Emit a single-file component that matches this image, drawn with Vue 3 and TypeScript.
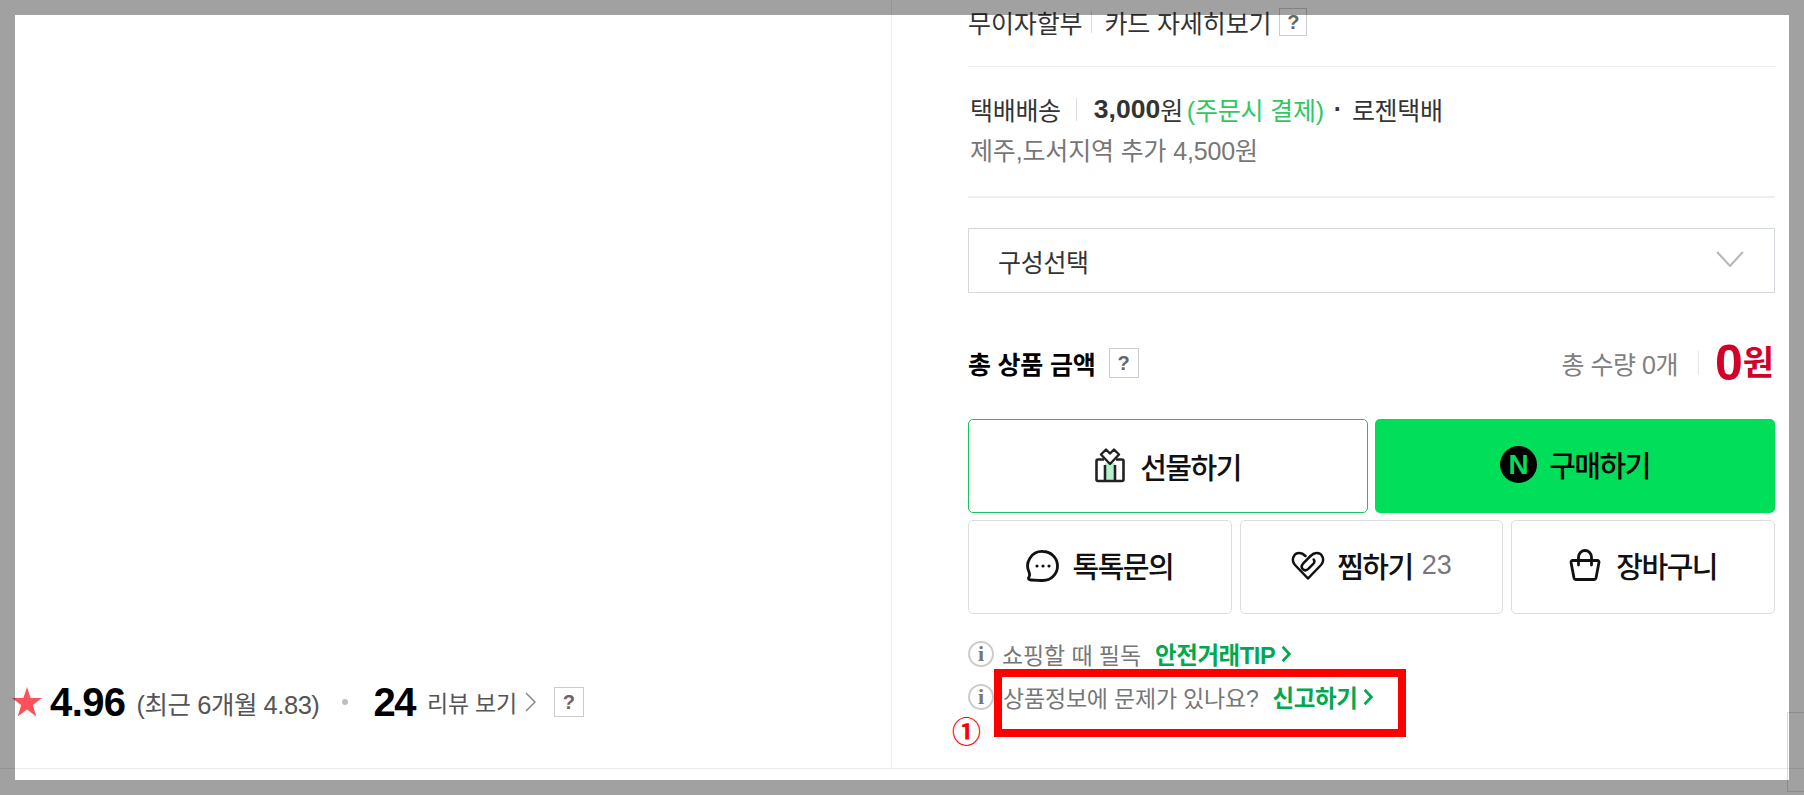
<script setup lang="ts">
interface Sub { label: string; count?: string }
const subs: Sub[] = [{ label: '톡톡문의' }, { label: '찜하기', count: '23' }, { label: '장바구니' }]
</script>

<template>
  <div class="page">
    <div class="main">
      <section class="left">
        <div class="rating">
          <svg class="star" viewBox="0 0 30 30"><path d="M15 0l3.600 10.900H30l-9.200 7 3.500 11.600L15 22.400 5.700 29.500l3.500-11.600L0 10.900h11.400z" fill="#fd5059" /></svg>
          <b class="score">4.96</b>
          <span class="recent">(최근 6개월 4.83)</span>
          <i class="dot"></i>
          <b class="score count">24</b>
          <span class="review">리뷰 보기</span>
          <svg class="rev-chev" viewBox="0 0 11 20"><path d="M1 1l9 9-9 9" fill="none" stroke="#888" stroke-width="1.500" /></svg>
          <span class="q q-rate">?</span>
        </div>
      </section>

      <section class="right">
        <div class="card-row">
          <span>무이자할부</span><i class="sep sep-card"></i><span>카드 자세히보기</span><span class="q q-card">?</span>
        </div>
        <div class="ship">
          <div class="ship-main">
            <span>택배배송</span><i class="sep sep-ship"></i><b class="fee">3,000</b><span>원</span><span class="green">(주문시 결제)</span><span class="mid">·</span><span>로젠택배</span>
          </div>
          <div class="ship-extra">제주,도서지역 추가 4,500원</div>
        </div>
        <div class="select">
          <span>구성선택</span>
          <svg class="chev" viewBox="0 0 26 15"><path d="M1 1l12 13L25 1" fill="none" stroke="#b4b9c2" stroke-width="2" /></svg>
        </div>
        <div class="total">
          <b class="total-label">총 상품 금액</b><span class="q q-total">?</span>
          <span class="qty">총 수량 0개</span><i class="sep sep-total"></i>
          <b class="zero">0</b><b class="won">원</b>
        </div>
        <div class="buy-row">
          <button class="btn gift">
            <svg class="gift-icon" viewBox="0 0 30 35">
              <path d="M10 15h10v18H10z" fill="#b5f2cc" />
              <path d="M9 11.500H3a1.500 1.500 0 0 0-1.500 1.500v18.500A1.500 1.500 0 0 0 3 33h24a1.500 1.500 0 0 0 1.500-1.500V13a1.500 1.500 0 0 0-1.500-1.500h-6M10 17v16M20 17v16" fill="none" stroke="#222" stroke-width="2.600" />
              <path d="M15 5.500L11 1.500 6 6.500 15 16l9-9.500-5-5z" fill="#fff" stroke="#222" stroke-width="2.400" stroke-linejoin="round" />
            </svg>
            <span>선물하기</span>
          </button>
          <button class="btn buy"><span class="npay">N</span><span>구매하기</span></button>
        </div>
        <div class="sub-row">
          <button v-for="(s, i) in subs" :key="s.label" class="btn sub">
            <svg v-if="i === 0" class="i-chat" viewBox="0 0 34 33">
              <path d="M17 2.500a14.500 14.500 0 0 1 0 29c-3.500 0-7-.5-12-.5-2 0-3.200-1.200-2-3 .8-1.300.8-2.500.2-4.500A14.500 14.500 0 0 1 17 2.500z" fill="none" stroke="#111" stroke-width="2.800" stroke-linejoin="round" />
              <circle cx="11" cy="17" r="1.600" fill="#111" /><circle cx="17" cy="17" r="1.600" fill="#111" /><circle cx="23" cy="17" r="1.600" fill="#111" />
            </svg>
            <svg v-else-if="i === 1" class="i-heart" viewBox="0 0 34 29">
              <path d="M14.500 5C13 3.500 11.500 2 8.500 2 2 2 0 9.500 4 14l13 13.500L30 14c4-4.500 2-12-4.500-12-3 0-4.500 1.500-6 3l-7 7.200c-2.200 2.300-2.200 4.500-.7 6 1.500 1.500 3.700 1.500 5.700-.5l4.500-4.500c1.500-1.500 1.800-3.200.7-4.700" fill="none" stroke="#111" stroke-width="2.500" stroke-linejoin="round" stroke-linecap="round" />
            </svg>
            <svg v-else class="i-bag" viewBox="0 0 32 32">
              <path d="M3.500 11.500h25a1.500 1.500 0 0 1 1.500 1.800l-3 15.700a2 2 0 0 1-2 1.500H7a2 2 0 0 1-2-1.500L2 13.300a1.500 1.500 0 0 1 1.500-1.800zM9.500 16V8a6.500 6.500 0 0 1 13 0v8" fill="none" stroke="#111" stroke-width="2.800" stroke-linejoin="round" stroke-linecap="round" />
            </svg>
            <span>{{ s.label }}</span><span v-if="s.count" class="cnt">{{ s.count }}</span>
          </button>
        </div>
        <div class="info">
          <span class="i-badge">i</span><span class="info-text">쇼핑할 때 필독</span><b class="link link-tip">안전거래TIP</b>
          <svg class="link-chev" viewBox="0 0 9 16"><path d="M1.500 1.500L7.500 8l-6 6.500" fill="none" stroke="#00a950" stroke-width="2.400" /></svg>
        </div>
        <div class="info info-2">
          <span class="i-badge">i</span><span class="info-text t2">상품정보에 문제가 있나요?</span><b class="link link-rep">신고하기</b>
          <svg class="link-chev" viewBox="0 0 9 16"><path d="M1.500 1.500L7.500 8l-6 6.500" fill="none" stroke="#00a950" stroke-width="2.400" /></svg>
        </div>
      </section>
    </div>

    <div class="mark"></div>
    <span class="num">①</span>
    <div class="corner"></div>
    <div class="frame"></div>
  </div>
</template>

<style>
html, body { margin: 0; background: #fff; overflow: hidden; }
</style>

<style scoped>
.page {
  position: relative;
  width: 1804px;
  height: 795px;
  overflow: hidden;
  background: #fff;
  font-family: "Liberation Sans", "Noto Sans CJK KR", sans-serif;
  color: #333;
}
.page i { font-style: normal; }
.main {
  display: flex;
  height: 768px;
  border-bottom: 1px solid #e9e9e9;
  box-sizing: content-box;
}
.left {
  width: 891px;
  flex: none;
  border-right: 1px solid #eee;
  display: flex;
  flex-direction: column;
  justify-content: flex-end;
  padding-bottom: 50px;
  box-sizing: content-box;
}
.rating { display: flex; align-items: center; height: 32px; padding-left: 12px; }
.star { width: 30px; height: 30px; flex: none; }
.score { font-size: 40px; line-height: 32px; color: #000; letter-spacing: -.6px; margin-left: 8px; }
.recent { font-size: 25.500px; color: #555; margin-left: 11px; letter-spacing: -.45px; }
.dot { width: 6px; height: 6px; border-radius: 50%; background: #bdbdbd; margin-left: 23px; }
.count { margin-left: 25px; letter-spacing: -1.500px; }
.review { font-size: 23px; color: #555; margin-left: 12px; letter-spacing: -.2px; }
.rev-chev { width: 11px; height: 20px; margin-left: 8px; flex: none; }
.q {
  display: inline-flex;
  align-items: center;
  justify-content: center;
  box-sizing: border-box;
  border: 1px solid #ccc;
  font-weight: 700;
  color: #666;
  font-size: 20px;
  flex: none;
}
.q-rate { width: 30px; height: 30px; margin-left: 18px; }
.right { width: 807px; margin-left: 76px; flex: none; }
.sep { display: block; width: 1px; background: #ddd; flex: none; }
.card-row {
  display: flex;
  align-items: center;
  height: 28px;
  margin-top: 8px;
  padding-bottom: 30px;
  border-bottom: 1px solid #eee;
  font-size: 25px;
  letter-spacing: -.12px;
}
.sep-card { height: 22px; margin: 0 12px 0 9px; }
.q-card { width: 28px; height: 28px; margin-left: 8px; letter-spacing: 0; }
.ship { height: 131px; box-sizing: border-box; border-bottom: 2px solid #eee; padding-top: 26px; }
.ship-main { display: flex; align-items: center; height: 32px; font-size: 25px; letter-spacing: -.3px; padding-left: 2px; }
.sep-ship { height: 23px; margin: 0 17px 0 15px; }
.fee { font-size: 26.500px; letter-spacing: 0; }
.green { color: #2fc85f; margin-left: 4px; letter-spacing: -.2px; }
.mid { margin: 0 10px 0 10px; font-weight: 700; }
.ship-extra { font-size: 25px; color: #777; margin-top: 10px; line-height: 32px; padding-left: 2px; letter-spacing: -.15px; }
.select {
  height: 65px;
  margin-top: 30px;
  box-sizing: border-box;
  border: 1px solid #d3d7de;
  display: flex;
  align-items: center;
  justify-content: space-between;
  padding: 0 30px 0 29px;
  font-size: 25px;
  letter-spacing: -.3px;
}
.chev { width: 28px; height: 16px; margin-top: -4px; }
.total { display: flex; align-items: center; height: 38px; margin-top: 51px; }
.total-label { font-size: 25px; color: #000; letter-spacing: -.2px; }
.q-total { width: 30px; height: 30px; margin-left: 13px; }
.qty { margin-left: auto; font-size: 25px; color: #808080; letter-spacing: -.5px; }
.sep-total { height: 24px; margin: 0 16px 0 20px; background: #e5e5e5; }
.zero { font-size: 50px; color: #d3002a; line-height: 38px; }
.won { font-size: 34px; color: #d3002a; line-height: 38px; margin-right: 1px; }
.buy-row { display: grid; grid-template-columns: 1fr 1fr; gap: 7px; margin-top: 37px; }
.sub-row { display: grid; grid-template-columns: repeat(3, 1fr); gap: 8px; margin-top: 7px; }
.btn {
  display: flex;
  align-items: center;
  justify-content: center;
  box-sizing: border-box;
  margin: 0;
  padding: 0;
  border-radius: 5px;
  background: #fff;
  font-family: inherit;
  font-weight: 500;
  font-size: 29px;
  letter-spacing: -1.500px;
  color: #111;
}
.gift { height: 94px; border: 1px solid #13c763; }
.gift-icon { width: 30px; height: 35px; margin-right: 15px; margin-top: -2px; }
.buy { height: 94px; border: 0; background: #00de5a; padding-bottom: 4px; color: #000; }
.npay {
  width: 37px;
  height: 37px;
  border-radius: 50%;
  background: #000;
  color: #00de5a;
  font-weight: 900;
  font-size: 28px;
  letter-spacing: 0;
  line-height: 37px;
  text-align: center;
  margin-right: 12px;
}
.sub { height: 94px; border: 1px solid #ddd; padding-bottom: 4px; }
.i-chat { width: 34px; height: 33px; margin-right: 12px; }
.i-heart { width: 34px; height: 29px; margin-right: 12px; }
.i-bag { width: 32px; height: 32px; margin-right: 15px; }
.cnt { color: #777; font-weight: 400; font-size: 27px; letter-spacing: 0; margin-left: 9px; }
.info { display: flex; align-items: center; height: 27px; margin-top: 26px; }
.info-2 { margin-top: 16px; }
.i-badge {
  width: 26px;
  height: 26px;
  box-sizing: border-box;
  border: 2px solid #ccc;
  border-radius: 50%;
  font-family: "Liberation Serif", serif;
  font-weight: 700;
  font-size: 22px;
  line-height: 22px;
  text-align: center;
  color: #777;
  flex: none;
}
.info-text { font-size: 23px; color: #777; margin-left: 8px; letter-spacing: -.1px; }
.t2 { margin-left: 9px; letter-spacing: -.2px; }
.link { font-size: 23.500px; color: #00a950; letter-spacing: -.4px; }
.link-tip { margin-left: 14px; }
.link-rep { margin-left: 14px; }
.link-chev { width: 10px; height: 18px; margin-left: 6px; flex: none; }
.mark {
  position: absolute;
  left: 994px;
  top: 669px;
  width: 412px;
  height: 68px;
  box-sizing: border-box;
  border: 8px solid #f00;
}
.num {
  position: absolute;
  left: 950px;
  top: 713px;
  width: 33px;
  text-align: center;
  font-family: "Noto Sans CJK KR", sans-serif;
  font-size: 29px;
  line-height: 34px;
  font-weight: 700;
  color: #f00;
}
.corner {
  position: absolute;
  left: 1787px;
  top: 712px;
  width: 40px;
  height: 78px;
  border: 1px solid #ddd;
}
.frame {
  position: absolute;
  inset: 0;
  box-sizing: border-box;
  border-style: solid;
  border-width: 15px;
  border-color: rgba(0, 0, 0, .37);
  pointer-events: none;
}
</style>
